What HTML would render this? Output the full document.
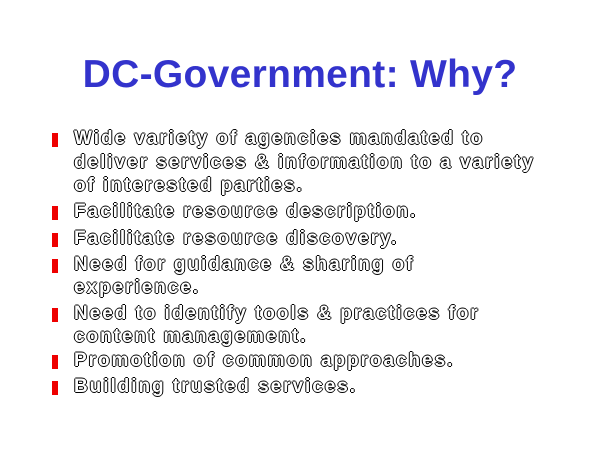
<!DOCTYPE html>
<html><head><style>
body{margin:0;width:600px;height:450px;background:#fff;position:relative;overflow:hidden;font-family:"Liberation Sans",sans-serif}
h1{position:absolute;left:0;width:600px;top:53px;margin:0;text-align:center;font-size:39px;font-weight:bold;color:#3333cc;letter-spacing:0.3px}
.l{position:absolute;left:74px;font-size:19px;font-weight:bold;color:#fff;letter-spacing:1.95px;white-space:nowrap;line-height:22px;
text-shadow:-1px 0 #000,1px 0 #000,0 -1px #000,0 1px #000}
.b{position:absolute;left:52px;width:6px;height:14px;background:#ee0000}
</style></head><body>
<h1>DC-Government: Why?</h1>
<div class="b" style="top:133px"></div>
<div class="l" style="top:128px">Wide variety of agencies mandated to</div>
<div class="l" style="top:152px">deliver services &amp; information to a variety</div>
<div class="l" style="top:175px">of interested parties.</div>
<div class="b" style="top:206px"></div>
<div class="l" style="top:201px">Facilitate resource description.</div>
<div class="b" style="top:233px"></div>
<div class="l" style="top:228px">Facilitate resource discovery.</div>
<div class="b" style="top:259px"></div>
<div class="l" style="top:254px">Need for guidance &amp; sharing of</div>
<div class="l" style="top:277px">experience.</div>
<div class="b" style="top:308px"></div>
<div class="l" style="top:303px">Need to identify tools &amp; practices for</div>
<div class="l" style="top:326px">content management.</div>
<div class="b" style="top:355px"></div>
<div class="l" style="top:350px">Promotion of common approaches.</div>
<div class="b" style="top:381px"></div>
<div class="l" style="top:376px">Building trusted services.</div>
</body></html>
